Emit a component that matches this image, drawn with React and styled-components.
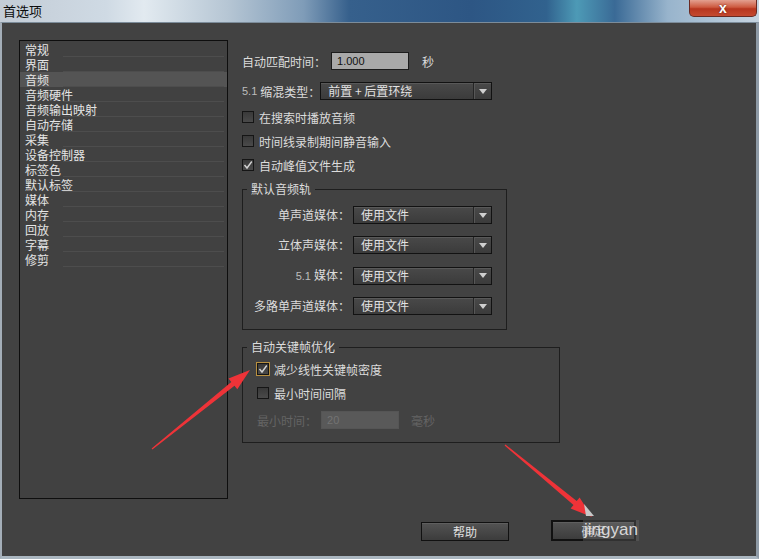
import React from 'react';
import styled, { createGlobalStyle, css } from 'styled-components';

const GlobalStyle = createGlobalStyle`
	html, body {
		margin: 0;
		padding: 0;
		background: #424242;
	}
	* {
		box-sizing: border-box;
	}
`;

const cjk = `"Noto Sans CJK SC", "Noto Sans", sans-serif`;

const Window = styled.div`
	position: relative;
	width: 759px;
	height: 559px;
	display: flex;
	flex-direction: column;
	overflow: hidden;
	font-family: ${cjk};
	font-size: 12px;
	color: #dcdcdc;
`;

const TitleBar = styled.div`
	height: 22px;
	display: flex;
	align-items: flex-start;
	background: linear-gradient(
		90deg,
		#c3ccd6 0%,
		#cfdae4 14%,
		#e2eaf0 19%,
		#b6c6d4 30%,
		#7f9cb8 40%,
		#36608c 46%,
		#2d5684 62%,
		#31628e 72%,
		#4d9ab6 76%,
		#3a6a96 81%,
		#98b4cc 88%,
		#c6d4e0 100%
	);
`;

const Title = styled.div`
	padding: 2px 0 0 3px;
	font-size: 13px;
	line-height: 18px;
	color: #0c0c0c;
`;

const CloseButton = styled.div`
	margin-left: auto;
	margin-right: 2px;
	width: 68px;
	height: 17px;
	border: 1px solid #6a2a22;
	border-top: none;
	border-radius: 0 0 5px 5px;
	background: linear-gradient(#e3a090, #cd5a40 45%, #b7361f 55%, #c44a30);
	display: flex;
	align-items: center;
	justify-content: center;
	font-family: 'Liberation Sans', sans-serif;
	font-weight: bold;
	font-size: 14px;
	line-height: 1;
	color: #fff;
	text-shadow: 0 0 2px #5a1a10;
`;

const Body = styled.div`
	flex: 1;
	display: flex;
	flex-direction: column;
	background: #424242;
	border-top: 1px solid #7c8c9a;
	border-left: 2px solid #a4aeb8;
	border-right: 3px solid #8e9aa6;
	border-bottom: 3px solid #aab6c0;
	padding: 17px 0 0 17px;
`;

const Main = styled.div`
	display: flex;
	align-items: flex-start;
	gap: 14px;
`;

const List = styled.div`
	width: 209px;
	height: 459px;
	border: 1px solid #0e0e0e;
	background: #414141;
	padding: 1px 0;
	display: flex;
	flex-direction: column;
`;

const ListItem = styled.div`
	height: 15px;
	line-height: 15px;
	padding-left: 5px;
	color: #e4e4e4;
	background-color: ${(props) => (props.selected ? '#545454' : 'transparent')};
	background-image: linear-gradient(#4d4d4d, #4d4d4d);
	background-repeat: no-repeat;
	background-size: calc(100% - 46px) 1px;
	background-position: right 3px bottom;
`;

const Panel = styled.div`
	display: flex;
	flex-direction: column;
	padding-top: 12px;
`;

const Row = styled.div`
	display: flex;
	align-items: center;
	height: 18px;
	margin-top: ${(props) => props.mt || 0}px;
	color: ${(props) => (props.disabled ? '#646464' : '#dcdcdc')};
	white-space: nowrap;
`;

const Small = styled.span`
	font-family: 'Liberation Sans', sans-serif;
	font-size: 11px;
	color: #bdbdbd;
	margin-right: 3px;
`;

const TextInput = styled.div`
	height: 18px;
	width: ${(props) => props.w}px;
	margin: 0 ${(props) => props.mr}px 0 ${(props) => props.ml}px;
	border: 1px solid ${(props) => (props.disabled ? '#555' : '#1c1c1c')};
	background: ${(props) => (props.disabled ? '#595959' : '#a9a9a9')};
	padding-left: 5px;
	font-family: 'Liberation Sans', sans-serif;
	font-size: 11px;
	line-height: 16px;
	color: ${(props) => (props.disabled ? '#737373' : '#111')};
`;

const SelectBox = styled.div`
	display: flex;
	height: 18px;
	width: ${(props) => props.w}px;
	margin-left: ${(props) => props.ml || 0}px;
	border: 1px solid #121212;
	background: linear-gradient(#494949, #3b3b3b);
	box-shadow: inset 0 1px 0 #595959;
`;

const SelectText = styled.div`
	flex: 1;
	padding-left: 7px;
	line-height: 16px;
	color: #e2e2e2;
	white-space: nowrap;
`;

const SelectArrow = styled.div`
	width: 18px;
	border-left: 1px solid #252525;
	box-shadow: inset 1px 0 0 #575757;
	display: flex;
	align-items: center;
	justify-content: center;

	&::before {
		content: '';
		border-left: 4px solid transparent;
		border-right: 4px solid transparent;
		border-top: 5px solid #cfcfcf;
	}
`;

const Checks = styled.div`
	display: flex;
	flex-direction: column;
	margin-top: 5px;
`;

const CheckRow = styled.label`
	display: flex;
	align-items: center;
	gap: 5px;
	height: ${(props) => props.h || 24}px;
	margin-top: ${(props) => props.mt || 0}px;
`;

const Box = styled.span`
	width: 12px;
	height: 12px;
	border: 1px solid #151515;
	background: linear-gradient(#393939, #4a4a4a);
	display: flex;
	align-items: center;
	justify-content: center;
	${(props) =>
		props.focus &&
		css`
			box-shadow: 0 0 0 1px #b89040;
		`}
`;

const Group = styled.fieldset`
	margin: ${(props) => props.mt}px 0 0 0;
	width: ${(props) => props.w}px;
	border: 1px solid #1e1e1e;
	padding: ${(props) => props.pad};
	min-width: 0;
`;

const Legend = styled.legend`
	margin-left: ${(props) => props.ml}px;
	padding: 0 4px;
	line-height: 16px;
	color: #dcdcdc;
`;

const TrackGrid = styled.div`
	display: grid;
	grid-template-columns: 107px 139px;
	column-gap: 3px;
	row-gap: 12px;
	align-items: center;
`;

const TrackLabel = styled.div`
	justify-self: end;
	line-height: 18px;
	white-space: nowrap;
`;

const Footer = styled.div`
	margin-top: 21px;
	display: flex;
	justify-content: flex-end;
	align-items: center;
	gap: 42px;
	padding-right: 120px;
`;

const Button = styled.div`
	width: ${(props) => (props.primary ? 85 : 88)}px;
	height: ${(props) => (props.primary ? 21 : 19)}px;
	margin-top: ${(props) => (props.primary ? 0 : 1)}px;
	border: ${(props) => (props.primary ? 2 : 1)}px solid #111;
	background: linear-gradient(#535353, #3c3c3c);
	box-shadow: inset 0 1px 0 #5f5f5f;
	display: flex;
	align-items: center;
	justify-content: center;
	color: #e0e0e0;
`;

const Overlay = styled.svg`
	position: absolute;
	left: 0;
	top: 0;
	pointer-events: none;
`;

const Watermark = styled.span`
	position: absolute;
	left: 583px;
	top: 520px;
	height: 21px;
	padding: 0 1px;
	font-family: 'Liberation Sans', sans-serif;
	font-size: 17px;
	line-height: 20px;
	color: rgba(232, 232, 232, 0.9);
	background: rgba(110, 110, 110, 0.35);
`;

const Check = () => (
	<svg width="10" height="10" viewBox="0 0 10 10">
		<path d="M1.5 5 L4 8 L8.8 1.5" fill="none" stroke="#d4d4d4" strokeWidth="1.4" />
	</svg>
);

const CheckBox = ({ checked, focus, children, ...rest }) => (
	<CheckRow {...rest}>
		<Box focus={focus}>{checked && <Check />}</Box>
		{children}
	</CheckRow>
);

const Select = ({ value, w, ml }) => (
	<SelectBox w={w} ml={ml}>
		<SelectText>{value}</SelectText>
		<SelectArrow />
	</SelectBox>
);

const sections = [
	'常规',
	'界面',
	'音频',
	'音频硬件',
	'音频输出映射',
	'自动存储',
	'采集',
	'设备控制器',
	'标签色',
	'默认标签',
	'媒体',
	'内存',
	'回放',
	'字幕',
	'修剪',
];

const tracks = [
	{ label: '单声道媒体：' },
	{ label: '立体声媒体：' },
	{ label: '媒体：', prefix: '5.1' },
	{ label: '多路单声道媒体：' },
];

export default function App() {
	return (
		<>
			<GlobalStyle />
			<Window>
				<TitleBar>
					<Title>首选项</Title>
					<CloseButton>x</CloseButton>
				</TitleBar>
				<Body>
					<Main>
						<List>
							{sections.map((s) => (
								<ListItem key={s} selected={s === '音频'}>
									{s}
								</ListItem>
							))}
						</List>
						<Panel>
							<Row>
								自动匹配时间：
								<TextInput w={78} ml={5} mr={13}>
									1.000
								</TextInput>
								秒
							</Row>
							<Row mt={12}>
								<Small>5.1</Small>缩混类型：
								<Select value="前置 + 后置环绕" w={172} ml={0} />
							</Row>
							<Checks>
								<CheckBox>在搜索时播放音频</CheckBox>
								<CheckBox>时间线录制期间静音输入</CheckBox>
								<CheckBox checked>自动峰值文件生成</CheckBox>
							</Checks>
							<Group mt={4} w={265} pad="9px 0 14px 0">
								<Legend ml={4}>默认音频轨</Legend>
								<TrackGrid>
									{tracks.map((t) => (
										<React.Fragment key={t.label}>
											<TrackLabel>
												{t.prefix && <Small>{t.prefix}</Small>}
												{t.label}
											</TrackLabel>
											<Select value="使用文件" w={139} />
										</React.Fragment>
									))}
								</TrackGrid>
							</Group>
							<Group mt={9} w={318} pad="5px 0 13px 14px">
								<Legend ml={-10}>自动关键帧优化</Legend>
								<CheckBox checked focus h={18}>
									减少线性关键帧密度
								</CheckBox>
								<CheckBox h={18} mt={6}>
									最小时间间隔
								</CheckBox>
								<Row mt={9} disabled>
									最小时间：
									<TextInput disabled w={78} ml={4} mr={12}>
										20
									</TextInput>
									毫秒
								</Row>
							</Group>
						</Panel>
					</Main>
					<Footer>
						<Button>帮助</Button>
						<Button primary>确定</Button>
					</Footer>
				</Body>
				<Overlay width="759" height="559" viewBox="0 0 759 559">
					<polygon
						points="152.4,449.5 234.5,385.7 237.3,389.2 250,370 228.5,378.4 231.3,381.9 151.6,448.5"
						fill="#ee3338"
					/>
					<polygon
						points="504.6,445.5 573.5,504.9 570.6,508.4 592,517 579.6,497.6 576.7,501.1 505.4,444.5"
						fill="#ee3338"
					/>
					<polygon points="584,504 594,516 586,516" fill="#c8c8c8" />
				</Overlay>
				<Watermark>jingyan</Watermark>
			</Window>
		</>
	);
}
